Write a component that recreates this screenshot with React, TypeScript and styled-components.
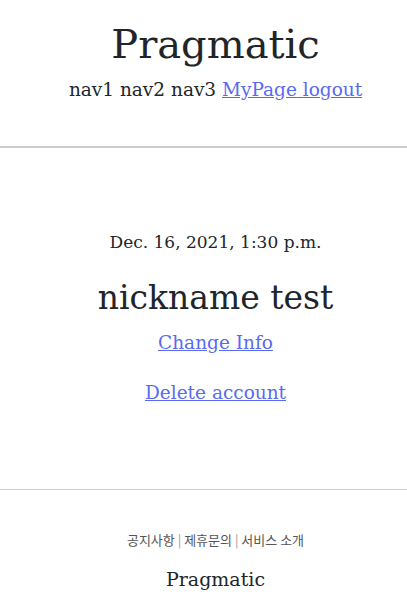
import React from "react";
import styled, { createGlobalStyle } from "styled-components";

const Global = createGlobalStyle`
  html, body { margin: 0; padding: 0; background: #fff; }
  body { font-family: "DejaVu Serif", "Liberation Serif", serif; color: #212529; }
`;

const Header = styled.header`
  padding: 20px 0 44px 24px;
  border-bottom: 2px solid #cccccc;
  text-align: center;
`;

const Title = styled.h1`
  margin: 0;
  font-size: 40px;
  line-height: 48px;
  font-weight: 400;
  color: #212529;
`;

const Nav = styled.nav`
  margin-top: 10px;
  font-size: 18.5px;
  line-height: 24px;
`;

const Link = styled.a`
  color: #5a6af0;
  text-decoration: underline;
`;

const Main = styled.main`
  padding: 82px 0 84px 24px;
  border-bottom: 1px solid #cccccc;
  display: flex;
  flex-direction: column;
  align-items: center;
`;

const DateText = styled.div`
  font-size: 17px;
  line-height: 24px;
`;

const Nick = styled.h2`
  margin: 24px 0 0;
  font-size: 33px;
  line-height: 40px;
  font-weight: 400;
`;

const ActionLink = styled(Link)<{ $gap: number }>`
  display: block;
  margin-top: ${(p) => p.$gap}px;
  font-size: 18.5px;
  line-height: 24px;
`;

const Footer = styled.footer`
  padding: 40px 0 20px 24px;
  display: flex;
  flex-direction: column;
  align-items: center;
  gap: 18px;
`;

const FooterLinks = styled.div`
  font-family: "Noto Sans CJK KR", "Noto Sans", sans-serif;
  font-size: 13px;
  line-height: 19px;
  color: #555;
`;

const Sep = styled.span`
  color: #999;
`;

const FooterBrand = styled.div`
  font-size: 19px;
  line-height: 24px;
  color: #212529;
`;

export default function App() {
  return (
    <>
      <Global />
      <Header>
        <Title>Pragmatic</Title>
        <Nav>
          nav1 nav2 nav3 <Link href="#">MyPage</Link><Link href="#"> logout</Link>
        </Nav>
      </Header>
      <Main>
        <DateText>Dec. 16, 2021, 1:30 p.m.</DateText>
        <Nick>nickname test</Nick>
        <ActionLink href="#" $gap={13}>Change Info</ActionLink>
        <ActionLink href="#" $gap={26}>Delete account</ActionLink>
      </Main>
      <Footer>
        <FooterLinks>
          공지사항 <Sep>|</Sep> 제휴문의 <Sep>|</Sep> 서비스 소개
        </FooterLinks>
        <FooterBrand>Pragmatic</FooterBrand>
      </Footer>
    </>
  );
}
